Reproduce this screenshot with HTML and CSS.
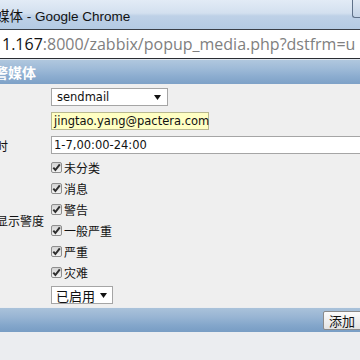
FILE: index.html
```html
<!DOCTYPE html>
<html lang="zh-CN">
<head>
<meta charset="utf-8">
<title>媒体</title>
<link rel="stylesheet" href="styles.css">
</head>
<body>
<div class="titlebar">
  <span class="title">媒体 - Google Chrome</span>
  <span class="winbtn"></span>
</div>
<div class="addr">
  <span class="host">1.167</span><span class="path">:8000/zabbix/popup_media.php?dstfrm=u</span>
</div>
<div class="sep"></div>
<div class="header"><span class="htext">报警媒体</span></div>
<div class="form">
  <div class="lbl">类型</div>
  <div class="val"><div class="sel sel-type"><span>sendmail</span><svg class="arrow" width="7" height="5" viewBox="0 0 7 5"><polygon points="0,0 7,0 3.5,5" fill="#111"/></svg></div></div>

  <div class="lbl">收件人</div>
  <div class="val"><div class="inp inp-mail">jingtao.yang@pactera.com</div></div>

  <div class="lbl">当启用时</div>
  <div class="val"><div class="inp inp-time">1-7,00:00-24:00</div></div>

  <div class="lbl lbl-mid">严重性显示警度</div>
  <div class="val checks">
    <label class="chk"><span class="box"><svg width="9" height="9" viewBox="0 0 9 9"><path d="M1.3 4.6 L3.4 7 L7.8 1.3" fill="none" stroke="#2e2e2e" stroke-width="2"/></svg></span>未分类</label>
    <label class="chk"><span class="box"><svg width="9" height="9" viewBox="0 0 9 9"><path d="M1.3 4.6 L3.4 7 L7.8 1.3" fill="none" stroke="#2e2e2e" stroke-width="2"/></svg></span>消息</label>
    <label class="chk"><span class="box"><svg width="9" height="9" viewBox="0 0 9 9"><path d="M1.3 4.6 L3.4 7 L7.8 1.3" fill="none" stroke="#2e2e2e" stroke-width="2"/></svg></span>警告</label>
    <label class="chk"><span class="box"><svg width="9" height="9" viewBox="0 0 9 9"><path d="M1.3 4.6 L3.4 7 L7.8 1.3" fill="none" stroke="#2e2e2e" stroke-width="2"/></svg></span>一般严重</label>
    <label class="chk"><span class="box"><svg width="9" height="9" viewBox="0 0 9 9"><path d="M1.3 4.6 L3.4 7 L7.8 1.3" fill="none" stroke="#2e2e2e" stroke-width="2"/></svg></span>严重</label>
    <label class="chk"><span class="box"><svg width="9" height="9" viewBox="0 0 9 9"><path d="M1.3 4.6 L3.4 7 L7.8 1.3" fill="none" stroke="#2e2e2e" stroke-width="2"/></svg></span>灾难</label>
  </div>

  <div class="lbl">状态</div>
  <div class="val"><div class="sel sel-status"><span>已启用</span><svg class="arrow" width="7" height="5" viewBox="0 0 7 5"><polygon points="0,0 7,0 3.5,5" fill="#111"/></svg></div></div>
</div>
<div class="footer"><span class="btn">添加</span></div>
</body>
</html>
```

FILE: styles.css
```css
html, body {
  margin: 0;
  padding: 0;
  overflow: hidden;
  width: 360px;
  height: 360px;
  background: #ebedf0;
}

.titlebar {
  height: 29px;
  display: flex;
  align-items: center;
  background: linear-gradient(#e2ebf6 0%, #d3e0ef 45%, #bed1e7 55%, #b4cae3 100%);
}
.title {
  margin-left: -4px;
  font-family: "Liberation Sans", "Noto Sans CJK SC", sans-serif;
  font-size: 13.5px;
  color: #111;
  white-space: nowrap;
  padding-top: 1px;
}
.winbtn {
  margin-left: auto;
  align-self: flex-start;
  width: 7px;
  height: 17px;
  border-left: 1px solid #5f7189;
  border-bottom: 1px solid #5f7189;
  border-bottom-left-radius: 3px;
  background: linear-gradient(#dfe8f3, #c3d3e6);
}

.addr {
  height: 28px;
  border-top: 1px solid #3a3f47;
  border-bottom: 1px solid #2a2d33;
  background: #fff;
  display: flex;
  align-items: center;
  padding-left: 2px;
  font-family: "Open Sans", sans-serif;
  font-size: 16px;
  white-space: nowrap;
}
.host { color: #111; }
.path { color: #808080; }

.sep {
  height: 1px;
  background: #dde5ee;
}

.header {
  height: 24px;
  display: flex;
  align-items: center;
  background: linear-gradient(#b0c7de 0%, #9fbbd8 35%, #8baccf 70%, #7ea1c7 100%);
}
.htext {
  margin-left: -20px;
  color: #fff;
  font-family: "Noto Sans CJK SC", sans-serif;
  font-weight: bold;
  font-size: 14px;
  white-space: nowrap;
}

.form {
  background: #efefef;
  margin-left: -40px;
  padding-top: 1px;
  display: grid;
  grid-template-columns: 91px auto;
  font-family: "DejaVu Sans", sans-serif;
  font-size: 11.5px;
  color: #111;
}
.lbl {
  font-family: "Noto Sans CJK SC", sans-serif;
  font-size: 12px;
  white-space: nowrap;
  display: flex;
  align-items: center;
}
.val {
  padding: 3px 0;
  display: flex;
  align-items: center;
}

.sel {
  height: 16px;
  border: 1px solid #a5a5a5;
  background: #fff;
  display: flex;
  align-items: center;
  box-sizing: content-box;
}
.sel-type {
  width: 110px;
  padding-left: 5px;
}
.sel-type .arrow { margin-left: auto; margin-right: 6px; }
.sel-status {
  width: 56px;
  padding-left: 4px;
  font-family: "Noto Sans CJK SC", sans-serif;
  font-size: 13px;
}
.sel-status .arrow { margin-left: auto; margin-right: 5px; }

.inp {
  height: 16px;
  line-height: 16px;
  padding-left: 2px;
  white-space: nowrap;
}
.inp-mail {
  width: 154px;
  border: 1px solid #b9b98f;
  background: #ffffc3;
}
.inp-time {
  width: 330px;
  border-top: 1px solid #a5a5a5;
  border-bottom: 1px solid #a5a5a5;
  border-left: 1px solid #a5a5a5;
  background: #fff;
}

.checks {
  flex-direction: column;
  align-items: flex-start;
  padding: 0;
}
.chk {
  height: 21px;
  display: flex;
  align-items: center;
  gap: 2px;
  font-family: "Noto Sans CJK SC", sans-serif;
  font-size: 12px;
  color: #111;
}
.box {
  width: 9px;
  height: 9px;
  border: 1px solid #8e8e8e;
  border-radius: 2px;
  background: linear-gradient(#d4d4d4, #f3f3f3);
  display: flex;
  align-items: center;
  justify-content: center;
}

.footer {
  height: 24px;
  margin-top: 1px;
  display: flex;
  align-items: center;
  justify-content: flex-end;
  background: linear-gradient(#aac2da 0%, #97b4d3 40%, #82a5ca 75%, #789dc4 100%);
}
.btn {
  margin-right: -20px;
  width: 50px;
  height: 17px;
  border: 1px solid #8a8a8a;
  border-radius: 2px;
  background: linear-gradient(#fbfbfb, #e3e3e3);
  font-family: "Noto Sans CJK SC", sans-serif;
  font-size: 13px;
  line-height: 17px;
  padding-left: 5px;
  color: #111;
}
```
